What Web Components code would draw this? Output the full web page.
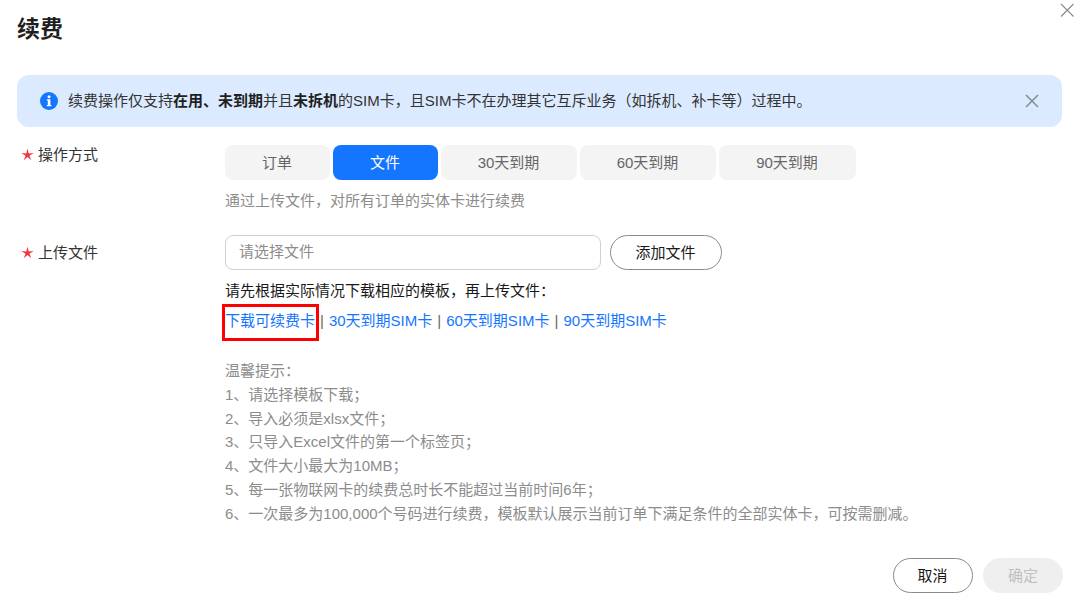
<!DOCTYPE html>
<html lang="zh-CN"><head><meta charset="utf-8">
<style>
html,body{margin:0;background:#fff;height:607px;overflow:hidden}
body{font:15px/20px "Liberation Sans","Noto Sans CJK SC",sans-serif;color:#333}
</style></head><body>
<renew-dialog></renew-dialog>
<template id="t-dialog"><style>
:host{display:block;position:relative;height:607px;box-sizing:border-box;padding:0 17px 0 17px}
h1{margin:0;height:75px;box-sizing:border-box;padding-top:14px;font-size:23px;line-height:30px;font-weight:700;color:#1f1f1f}
.x{position:absolute;right:5px;top:2px;width:16px;height:16px;color:#8a8a8a}
footer{position:absolute;right:17px;top:558px;display:flex;gap:10px}
</style>
<h1>续费</h1>
<svg class="x" viewBox="0 0 16 16" fill="none" stroke="currentColor" stroke-width="1.1"><path d="M2 2l12.500 12.500M14.500 2L2 14.500"/></svg>
<notice-bar></notice-bar>
<form-row label="操作方式" pad="0">
  <tab-group></tab-group>
  <div style="margin-top:11px;height:20px;color:#8c8c8c">通过上传文件，对所有订单的实体卡进行续费</div>
</form-row>
<form-row label="上传文件" pad="24" off="8">
  <upload-panel></upload-panel>
</form-row>
<footer><pill-btn>取消</pill-btn><pill-btn disabled>确定</pill-btn></footer>
</template>
<template id="t-notice"><style>
:host{display:flex;align-items:center;height:52px;box-sizing:border-box;margin-right:1px;padding:0 23px 0 23px;background:#dbeafe;border-radius:12px;color:#333;line-height:20px}
svg.i{width:18px;height:18px;flex:none;margin-right:10px}
span{flex:1;white-space:nowrap}
b{font-weight:700;color:#1f1f1f}
svg.c{width:14px;height:14px;flex:none;color:#7f8690}
</style>
<svg class="i" viewBox="0 0 18 18"><circle cx="9" cy="9" r="9" fill="#1476ff"/><circle cx="9" cy="4.700" r="1.500" fill="#fff"/><path d="M6.800 7.200h3.600v5.800h1v1.200H6.800V13h1V8.400h-1z" fill="#fff"/></svg>
<span>续费操作仅支持<b>在用、未到期</b>并且<b>未拆机</b>的SIM卡，且SIM卡不在办理其它互斥业务（如拆机、补卡等）过程中。</span>
<svg class="c" viewBox="0 0 14 14" fill="none" stroke="currentColor" stroke-width="1.400"><path d="M1 1l12 12M13 1L1 13"/></svg>
</template>
<template id="t-row"><style>
:host{display:flex}
.l{width:208px;flex:none;display:flex;align-items:flex-start;color:#333}
.s{width:21px;padding-left:4px;box-sizing:border-box;flex:none}
.s svg{width:13px;height:13px;display:block;margin-top:3px}
.c{flex:1;min-width:0}
</style>
<div class="l"><span class="s"><svg viewBox="0 0 11 11" fill="#f5333f"><path d="M5.500.5L6.500 4.620 10.730 4.300 7.120 6.530 8.730 10.450 5.500 7.700 2.270 10.450 3.880 6.530 .27 4.300 4.500 4.620z"/></svg></span><span class="t"></span></div>
<div class="c"><slot></slot></div>
</template>
<template id="t-tabs"><style>
:host{display:flex;gap:3px;height:35px}
button{all:unset;box-sizing:border-box;height:35px;background:#f4f4f4;border-radius:8px;text-align:center;color:#666;font:inherit;line-height:35px;padding-right:1px}
.on{background:#1476ff;color:#fff}
</style>
<button style="width:105px">订单</button><button class="on" style="width:105px">文件</button><button style="width:136px">30天到期</button><button style="width:136px">60天到期</button><button style="width:137px">90天到期</button>
</template>
<template id="t-upload"><style>
:host{display:block;position:relative}
.top{display:flex;gap:9px;height:35px}
.in{width:376px;height:35px;box-sizing:border-box;border:1px solid #d0d0d0;border-radius:8px;padding:0 13px;line-height:32px;color:#8c8c8c}
.lead{margin-top:11px;height:20px;color:#191919}
.links{margin-top:10px;height:20px;color:#666;white-space:nowrap;display:flex}
a{color:#1476ff;text-decoration:none}
i{font-style:normal;margin:0 5px}
.mark{position:absolute;left:-3px;top:69px;width:97px;height:37px;box-sizing:border-box;border:3px solid #f00}
.tips{margin-top:28px;color:#8c8c8c;line-height:23.800px;white-space:nowrap}
</style>
<div class="top"><div class="in">请选择文件</div><pill-btn wide>添加文件</pill-btn></div>
<div class="lead">请先根据实际情况下载相应的模板，再上传文件：</div>
<div class="links"><a>下载可续费卡</a><i>|</i><a>30天到期SIM卡</a><i>|</i><a>60天到期SIM卡</a><i>|</i><a>90天到期SIM卡</a></div>
<div class="mark"></div>
<div class="tips">温馨提示：<br>1、请选择模板下载；<br>2、导入必须是xlsx文件；<br>3、只导入Excel文件的第一个标签页；<br>4、文件大小最大为10MB；<br>5、每一张物联网卡的续费总时长不能超过当前时间6年；<br>6、一次最多为100,000个号码进行续费，模板默认展示当前订单下满足条件的全部实体卡，可按需删减。</div>
</template>
<template id="t-btn"><style>
:host{display:block;width:80px;height:35px;box-sizing:border-box;border:1px solid #8a8a8a;border-radius:18px;text-align:center;line-height:33px;color:#191919;background:#fff;padding-right:1px}
:host([wide]){width:112px}
:host([disabled]){background:#efefef;border-color:#efefef;color:#bfbfbf;padding-right:0}
</style><slot></slot></template>
<script>
const mk=(name,id,init)=>customElements.define(name,class extends HTMLElement{
  constructor(){super();const r=this.attachShadow({mode:'open'});r.append(document.getElementById(id).content.cloneNode(true));}
  connectedCallback(){init&&init(this)}
});
mk('notice-bar','t-notice',h=>{h.style.marginBottom='18px'});
mk('form-row','t-row',h=>{
  h.shadowRoot.querySelector('.t').textContent=h.getAttribute('label');
  h.style.marginTop=(h.getAttribute('pad')||0)+'px';
  h.shadowRoot.querySelector('.l').style.paddingTop=(h.getAttribute('off')||0)+'px';
});
mk('tab-group','t-tabs');
mk('upload-panel','t-upload');
mk('pill-btn','t-btn');
mk('renew-dialog','t-dialog');
</script>
</body></html>
